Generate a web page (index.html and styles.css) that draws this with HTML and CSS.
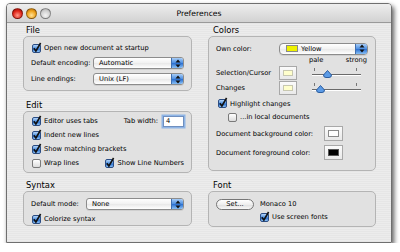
FILE: index.html
```html
<!DOCTYPE html>
<html lang="en">
<head>
    <meta charset="UTF-8">
    <title>Preferences</title>
    <link rel="stylesheet" href="styles.css">
</head>
<body>
    <div class="window">
        <div class="titlebar">
            <div class="lights">
                <span class="light red"></span>
                <span class="light amber"></span>
                <span class="light off"></span>
            </div>
            <div class="title">Preferences</div>
        </div>

        <div class="content">
            <div class="column left">
                <div class="group-label">File</div>
                <div class="box file-box">
                    <div class="row">
                        <span class="cb on"><svg width="10" height="11" viewBox="0 0 10 11"><path d="M1.8 6.2 L3.9 9 L8.6 1" fill="none" stroke="#111" stroke-width="1.6"/></svg></span>
                        Open new document at startup
                    </div>
                    <div class="row tall">
                        <span class="field-label enc">Default encoding:</span>
                        <div class="popup wide"><span>Automatic</span><span class="stepper"><svg width="6" height="9" viewBox="0 0 6 9"><path d="M3 0.5 L5.5 3.5 H0.5 Z M3 8.5 L5.5 5.5 H0.5 Z" fill="#111"/></svg></span></div>
                    </div>
                    <div class="row tall">
                        <span class="field-label enc">Line endings:</span>
                        <div class="popup wide"><span>Unix (LF)</span><span class="stepper"><svg width="6" height="9" viewBox="0 0 6 9"><path d="M3 0.5 L5.5 3.5 H0.5 Z M3 8.5 L5.5 5.5 H0.5 Z" fill="#111"/></svg></span></div>
                    </div>
                </div>

                <div class="group-label spaced">Edit</div>
                <div class="box edit-box">
                    <div class="row">
                        <span class="cb on"><svg width="10" height="11" viewBox="0 0 10 11"><path d="M1.8 6.2 L3.9 9 L8.6 1" fill="none" stroke="#111" stroke-width="1.6"/></svg></span>
                        Editor uses tabs
                        <span class="tab-label">Tab width:</span>
                        <span class="text-input">4</span>
                    </div>
                    <div class="row">
                        <span class="cb on"><svg width="10" height="11" viewBox="0 0 10 11"><path d="M1.8 6.2 L3.9 9 L8.6 1" fill="none" stroke="#111" stroke-width="1.6"/></svg></span>
                        Indent new lines
                    </div>
                    <div class="row">
                        <span class="cb on"><svg width="10" height="11" viewBox="0 0 10 11"><path d="M1.8 6.2 L3.9 9 L8.6 1" fill="none" stroke="#111" stroke-width="1.6"/></svg></span>
                        Show matching brackets
                    </div>
                    <div class="row">
                        <span class="half"><span class="cb"></span>Wrap lines</span>
                        <span class="cb on"><svg width="10" height="11" viewBox="0 0 10 11"><path d="M1.8 6.2 L3.9 9 L8.6 1" fill="none" stroke="#111" stroke-width="1.6"/></svg></span>
                        Show Line Numbers
                    </div>
                </div>

                <div class="group-label spaced-sm">Syntax</div>
                <div class="box syntax-box">
                    <div class="row tall">
                        <span class="field-label mode">Default mode:</span>
                        <div class="popup mode-popup"><span>None</span><span class="stepper"><svg width="6" height="9" viewBox="0 0 6 9"><path d="M3 0.5 L5.5 3.5 H0.5 Z M3 8.5 L5.5 5.5 H0.5 Z" fill="#111"/></svg></span></div>
                    </div>
                    <div class="row">
                        <span class="cb on"><svg width="10" height="11" viewBox="0 0 10 11"><path d="M1.8 6.2 L3.9 9 L8.6 1" fill="none" stroke="#111" stroke-width="1.6"/></svg></span>
                        Colorize syntax
                    </div>
                </div>
            </div>

            <div class="column right">
                <div class="group-label">Colors</div>
                <div class="box colors-box">
                    <div class="row own">
                        <span class="field-label color-label">Own color:</span>
                        <div class="popup color-popup"><span class="chip yellow"></span><span>Yellow</span><span class="stepper"><svg width="6" height="9" viewBox="0 0 6 9"><path d="M3 0.5 L5.5 3.5 H0.5 Z M3 8.5 L5.5 5.5 H0.5 Z" fill="#111"/></svg></span></div>
                    </div>
                    <div class="row scale">
                        <span>pale</span><span>strong</span>
                    </div>
                    <div class="row swatch-row">
                        <span class="field-label color-label">Selection/Cursor</span>
                        <span class="well small"><span class="chip pale"></span></span>
                        <div class="slider">
                            <span class="tick first"></span><span class="tick last"></span>
                            <span class="track"></span>
                            <svg class="thumb" style="left: 11px" width="9" height="8" viewBox="0 0 9 8"><path d="M4.5 0.5 L8.5 5 Q8.5 7.5 6 7.5 H3 Q0.5 7.5 0.5 5 Z" fill="#5b9be6" stroke="#2d5d9e"/></svg>
                        </div>
                    </div>
                    <div class="row swatch-row">
                        <span class="field-label color-label">Changes</span>
                        <span class="well small"><span class="chip pale"></span></span>
                        <div class="slider">
                            <span class="tick first"></span><span class="tick last"></span>
                            <span class="track"></span>
                            <svg class="thumb" style="left: 4px" width="9" height="8" viewBox="0 0 9 8"><path d="M4.5 0.5 L8.5 5 Q8.5 7.5 6 7.5 H3 Q0.5 7.5 0.5 5 Z" fill="#5b9be6" stroke="#2d5d9e"/></svg>
                        </div>
                    </div>
                    <div class="row highlight">
                        <span class="cb on"><svg width="10" height="11" viewBox="0 0 10 11"><path d="M1.8 6.2 L3.9 9 L8.6 1" fill="none" stroke="#111" stroke-width="1.6"/></svg></span>
                        Highlight changes
                    </div>
                    <div class="row local">
                        <span class="cb"></span>
                        ...in local documents
                    </div>
                    <div class="row swatch-row doc">
                        <span class="field-label doc-label">Document background color:</span>
                        <span class="well"><span class="chip white"></span></span>
                    </div>
                    <div class="row swatch-row doc">
                        <span class="field-label doc-label">Document foreground color:</span>
                        <span class="well"><span class="chip black"></span></span>
                    </div>
                </div>

                <div class="group-label spaced">Font</div>
                <div class="box font-box">
                    <div class="row">
                        <span class="button">Set...</span>
                        <span class="font-name">Monaco 10</span>
                    </div>
                    <div class="row indent">
                        <span class="cb on"><svg width="10" height="11" viewBox="0 0 10 11"><path d="M1.8 6.2 L3.9 9 L8.6 1" fill="none" stroke="#111" stroke-width="1.6"/></svg></span>
                        Use screen fonts
                    </div>
                </div>
            </div>
        </div>
    </div>
</body>
</html>
```

FILE: styles.css
```css
body {
    margin: 0;
    background: #fff;
    font-family: 'DejaVu Sans', sans-serif;
    font-size: 6.7px;
    color: #000;
}
.window {
    box-sizing: border-box;
    width: 386px;
    height: 240px;
    margin: 3px 0 0 6px;
    border: 1px solid #6f6f6f;
    border-radius: 4px 4px 0 0;
    background: repeating-linear-gradient(#ececec 0, #ececec 1px, #e6e6e6 1px, #e6e6e6 2px);
    box-shadow: 2px 3px 5px rgba(0,0,0,0.65);
    overflow: hidden;
}
.titlebar {
    position: relative;
    height: 18px;
    border-bottom: 1px solid #9a9a9a;
    background: linear-gradient(#eeeeee, #d2d2d2);
    display: flex;
    align-items: center;
    justify-content: center;
}
.lights {
    position: absolute;
    left: 5px;
    top: 4px;
    display: flex;
    gap: 3px;
}
.light {
    width: 11px;
    height: 11px;
    border-radius: 50%;
    box-sizing: border-box;
    border: 1px solid rgba(0,0,0,0.35);
}
.red {
    background: radial-gradient(circle at 50% 70%, #ff9a8a, #e0261a 55%, #8e0d05);
}
.amber {
    background: radial-gradient(circle at 50% 70%, #ffe39a, #f0a31c 55%, #a9620a);
}
.off {
    background: radial-gradient(circle at 50% 70%, #f4f4f4, #cfcfcf 60%, #9c9c9c);
}
.title {
    font-size: 7.7px;
    padding-top: 1px;
}
.content {
    display: flex;
    gap: 16px;
    padding: 2px 0 0 16px;
}
.column {
    display: flex;
    flex-direction: column;
}
.left {
    width: 169px;
}
.right {
    width: 168px;
}
.group-label {
    height: 11px;
    line-height: 11px;
    font-size: 8.4px;
    padding-left: 3px;
}
.right .group-label {
    padding-left: 5px;
}
.spaced {
    margin-top: 9px;
}
.spaced-sm {
    margin-top: 7px;
}
.box {
    box-sizing: border-box;
    border: 1px solid #b4b4b4;
    border-radius: 5px;
    background: #e1e1e1;
    padding: 0 7px;
}
.file-box {
    height: 55px;
    padding-top: 4px;
}
.edit-box {
    height: 62px;
    padding-top: 2px;
}
.syntax-box {
    height: 35px;
    padding-top: 4px;
}
.colors-box {
    height: 135px;
    padding-top: 5px;
}
.font-box {
    height: 36px;
    padding-top: 5px;
}
.row {
    display: flex;
    align-items: center;
    height: 14px;
    white-space: nowrap;
}
.row.tall {
    height: 16px;
}
.cb {
    position: relative;
    flex: none;
    box-sizing: border-box;
    width: 9px;
    height: 9px;
    margin: 0 3px 0 1px;
    border: 1px solid #7a7a7a;
    border-radius: 2px;
    background: linear-gradient(#ffffff, #dcdcdc);
}
.cb.on {
    border-color: #2b4d84;
    background: linear-gradient(#b4d5f8, #4b8ee0 50%, #2f74d3 60%, #8cc2f6);
}
.cb svg {
    position: absolute;
    left: -1px;
    top: -3px;
}
.field-label {
    flex: none;
}
.enc {
    width: 62px;
}
.mode {
    width: 55px;
}
.popup {
    box-sizing: border-box;
    display: flex;
    align-items: center;
    height: 12px;
    padding-left: 5px;
    border: 1px solid #8c8c8c;
    border-radius: 3px;
    background: linear-gradient(#ffffff, #f1f1f1 50%, #e8e8e8 51%, #ffffff);
    box-shadow: 0 1px 0 rgba(0,0,0,0.08);
}
.popup.wide {
    width: 91px;
}
.popup.mode-popup {
    width: 98px;
}
.stepper {
    margin-left: auto;
    width: 11px;
    height: 10px;
    border-left: 1px solid #3f6fb0;
    border-radius: 0 2px 2px 0;
    background: linear-gradient(#a8cdf7, #4a8de1 50%, #2f73d2 55%, #89c0f5);
    display: flex;
    align-items: center;
    justify-content: center;
}
.tab-label {
    margin-left: auto;
    margin-right: 5px;
}
.text-input {
    box-sizing: border-box;
    width: 21px;
    height: 11px;
    padding-left: 2px;
    line-height: 9px;
    background: #fff;
    border: 1px solid #6f8fbf;
    box-shadow: 0 0 0 1.5px #8fb5e6;
}
.half {
    display: flex;
    align-items: center;
    width: 74px;
}
.color-label {
    width: 63px;
}
.own {
    height: 13px;
}
.color-popup {
    width: 89px;
    padding-left: 6px;
    border-radius: 4px;
}
.chip {
    box-sizing: border-box;
    display: block;
    border: 1px solid #8a8a8a;
}
.yellow {
    width: 12px;
    height: 7px;
    margin-right: 3px;
    background: #eef200;
}
.scale {
    height: 10px;
    width: 58px;
    margin-left: 93px;
    justify-content: space-between;
}
.swatch-row {
    height: 15px;
}
.well {
    box-sizing: border-box;
    flex: none;
    width: 19px;
    height: 15px;
    padding: 3px;
    border: 1px solid #a8a8a8;
    background: linear-gradient(#fbfbfb, #e9e9e9);
}
.well.small {
    width: 18px;
    height: 14px;
}
.well .chip {
    width: 100%;
    height: 100%;
}
.pale {
    background: #ffffcc;
    border-color: #c8c8b0;
}
.white {
    background: #fff;
}
.black {
    background: #000;
    border-color: #555;
}
.slider {
    position: relative;
    width: 49px;
    height: 15px;
    margin-left: 15px;
}
.track {
    position: absolute;
    left: 0;
    right: 0;
    top: 9px;
    height: 1px;
    background: #6a6a6a;
    box-shadow: 0 1px 0 #fff;
}
.tick {
    position: absolute;
    top: 3px;
    width: 1px;
    height: 3px;
    background: #777;
}
.tick.first {
    left: 2px;
}
.tick.last {
    right: 4px;
}
.thumb {
    position: absolute;
    top: 5px;
}
.highlight {
    height: 13px;
    margin-top: 2px;
    padding-left: 1px;
}
.local {
    padding-left: 11px;
}
.doc {
    margin-top: 2px;
}
.doc + .doc {
    margin-top: 4px;
}
.doc-label {
    width: 108px;
}
.button {
    box-sizing: border-box;
    width: 38px;
    height: 11px;
    line-height: 9px;
    text-align: center;
    border: 1px solid #767676;
    border-radius: 6px;
    background: linear-gradient(#ffffff, #eeeeee 50%, #dedede 51%, #f8f8f8);
}
.font-name {
    margin-left: 6px;
}
.indent {
    margin-top: -1px;
    padding-left: 43px;
}
```
